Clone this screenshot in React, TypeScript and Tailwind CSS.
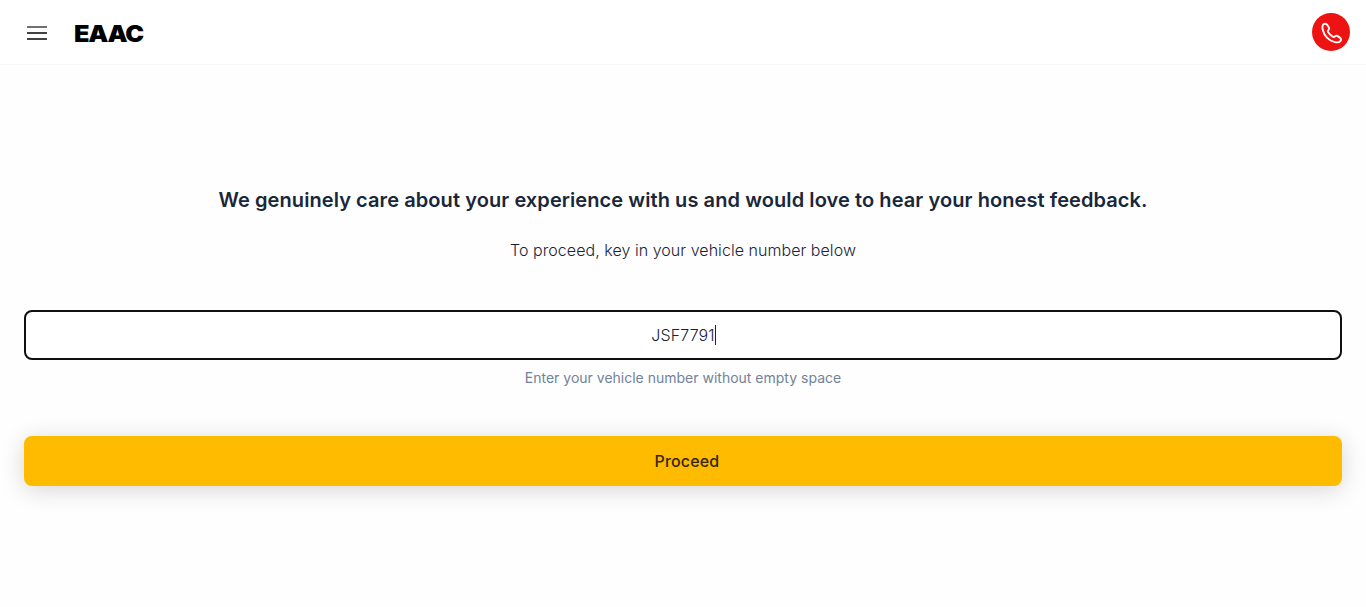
import React from "react";

export default function App() {
  return (
    <div className="h-[607px] overflow-hidden bg-[#fefefe] font-[Inter,sans-serif] text-[#1a2238]">
      <header className="flex h-[65px] items-center border-b border-[#f7f7f7] bg-white pl-[25px] pr-4">
        <button aria-label="Menu" className="mt-0.5">
          <svg width="24" height="24" viewBox="0 0 24 24" fill="none" stroke="#424242" strokeWidth="2">
            <path d="M2 6h20" strokeOpacity="0.75" />
            <path d="M2 12h20M2 18h20" />
          </svg>
        </button>
        <div className="ml-[25px] mt-1 origin-left scale-x-[1.1] text-[23px] font-black leading-8 tracking-[-1.1px] text-black">EAAC</div>
        <button aria-label="Call" className="ml-auto flex size-[38px] items-center justify-center rounded-full bg-[#ed1313] text-white">
          <svg width="24" height="24" viewBox="0 0 24 24" fill="none" stroke="currentColor" strokeWidth="1.9" strokeLinejoin="round">
            <path d="M4.5 4.2C5.8 3.5 7.4 3.6 8.3 4.9L10.1 7.8C10.8 9.2 8.8 10.2 8.8 11.3C8.8 12.7 13.2 17 14.7 17C15.7 17 16.8 15 18.2 15.9L20.9 17.6C22.3 18.5 22.1 20.2 21.4 21.2C19.5 23.5 12.8 22.4 8.2 17.8C3.6 13.2 2.4 6 4.5 4.2Z" />
          </svg>
        </button>
      </header>
      <main className="px-6 pt-[120px] text-center">
        <h1 className="text-[20px] font-semibold leading-[30px] tracking-[0.08px] text-[#1a2639]">We genuinely care about your experience with us and would love to hear your honest feedback.</h1>
        <p className="mt-[23px] text-[16px] font-light leading-6 tracking-[0.05px]">To proceed, key in your vehicle number below</p>
        <div className="mt-12 flex h-[50px] items-center justify-center rounded-lg border-2 border-[#0f0f12] bg-white pl-px text-[16px] font-light tracking-[0.15px]">
          JSF7791<span className="h-5 w-px bg-[#1a2238]" />
        </div>
        <p className="mt-2 text-[14px] leading-5 text-[#718398]">Enter your vehicle number without empty space</p>
        <button className="mt-12 h-[50px] w-full rounded-lg bg-[#ffbb00] pl-2 text-[16px] font-medium tracking-[0.16px] text-[#33260a] shadow-[0_4px_24px_rgba(0,0,0,0.16)]">Proceed</button>
      </main>
    </div>
  );
}
